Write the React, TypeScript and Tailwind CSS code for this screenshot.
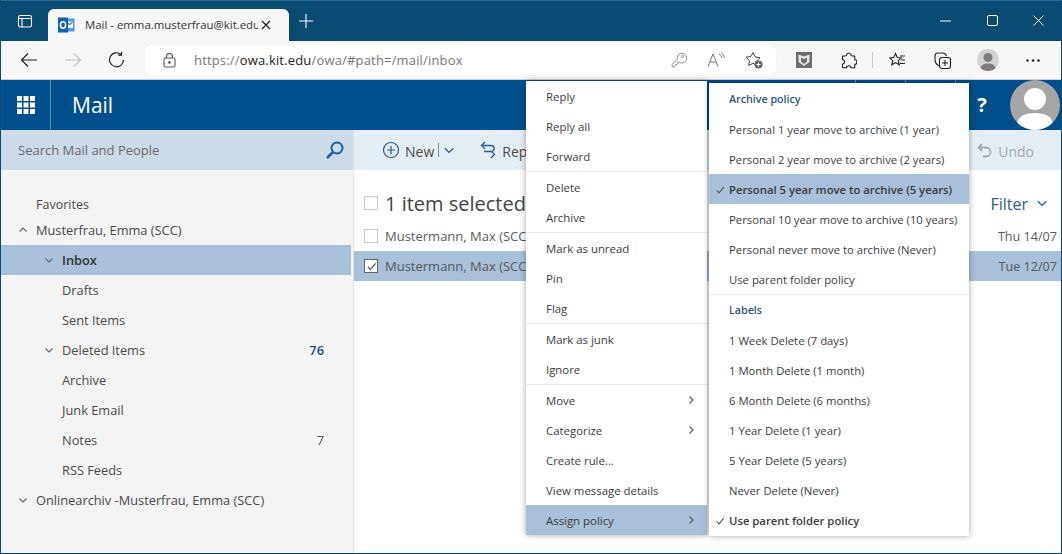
import React from "react";

const F = { fontFamily: '"Open Sans", "Noto Sans", sans-serif' };

function Chevron({ dir = "down", className = "" }: { dir?: "down" | "up" | "right"; className?: string }) {
  const d = dir === "down" ? "M1.5 3.5 5 7l3.5-3.5" : dir === "up" ? "M1.5 6.5 5 3l3.5 3.5" : "M3.5 1.5 7 5 3.5 8.5";
  return (
    <svg viewBox="0 0 10 10" className={className} fill="none" stroke="currentColor" strokeWidth="1.1">
      <path d={d} />
    </svg>
  );
}

function Check({ className = "" }: { className?: string }) {
  return (
    <svg viewBox="0 0 12 12" className={className} fill="none" stroke="currentColor" strokeWidth="1.3">
      <path d="M2 6.5 4.8 9.5 10.5 2.5" />
    </svg>
  );
}

function MenuRow({ label, arrow, active }: { label: string; arrow?: boolean; active?: boolean }) {
  return (
    <div className={`h-[30px] flex items-center pl-5 pr-[11px] text-[11.4px] text-[#3c3c3c] ${active ? "bg-[#a8c0d8]" : ""}`}>
      <span className="flex-1 pt-[2px]">{label}</span>
      {arrow && <Chevron dir="right" className="w-[10px] h-[10px] text-[#555]" />}
    </div>
  );
}

function Divider() {
  return <div className="h-px bg-[#eaeaea]" />;
}

function SubRow({ label, checked, active, bold }: { label: string; checked?: boolean; active?: boolean; bold?: boolean }) {
  return (
    <div className={`h-[30px] flex items-center pt-[2px] whitespace-nowrap text-[11.3px] text-[#3c3c3c] ${active ? "bg-[#a8c0d8]" : ""} ${bold ? "font-semibold" : ""}`}>
      <span className="w-[20px] pl-[6px] flex items-center">
        {checked && <Check className="w-[10px] h-[10px] text-[#555]" />}
      </span>
      <span>{label}</span>
    </div>
  );
}

function SubHead({ label }: { label: string }) {
  return <div className="h-[30px] flex items-center pl-[20px] text-[10.7px] font-semibold text-[#2f5587]">{label}</div>;
}

function Folder({ label, indent, chevron, count, active, countDark }: { label: string; indent: "a" | "b"; chevron?: "up" | "down"; count?: string; active?: boolean; countDark?: boolean }) {
  return (
    <div className={`h-[30px] flex items-center text-[12.8px] text-[#4a4a4a] w-[350px] pr-[27px] ${active ? "bg-[#a8c0d8] font-semibold text-[#333]" : ""}`}>
      <span className={`${indent === "a" ? "w-[35px] pl-[17px]" : "w-[61px] pl-[43px]"} flex items-center`}>
        {chevron && <Chevron dir={chevron} className="w-[10px] h-[10px] text-[#666]" />}
      </span>
      <span className="flex-1 pt-[2px]">{label}</span>
      {count && <span className={`pt-[2px] ${countDark ? "font-semibold text-[#1f4e83]" : "text-[#555]"}`}>{count}</span>}
    </div>
  );
}

function ListRow({ date, checked, active }: { date: string; checked?: boolean; active?: boolean }) {
  return (
    <div className={`h-[30px] flex items-center text-[13px] text-[#5a5a5a] pl-[10px] pr-[4px] ${active ? "bg-[#a8c0d8]" : ""}`}>
      <span className={`w-[14px] h-[14px] border flex items-center justify-center ${checked ? "border-[#666] bg-white" : "border-[#c8c8c8]"}`}>
        {checked && <Check className="w-[11px] h-[11px] text-[#555]" />}
      </span>
      <span className="ml-[7px] flex-1 pt-[2px]">Mustermann, Max (SCC)</span>
      <span className="pt-[2px] text-[12.6px]">{date}</span>
    </div>
  );
}

function IconBtn({ w, children }: { w: string; children: React.ReactNode }) {
  return <span className={`${w} flex justify-center items-center shrink-0`}>{children}</span>;
}

export default function App() {
  return (
    <div style={F} className="relative w-[1062px] h-[554px] overflow-hidden bg-white flex flex-col border-x border-b border-[#094a72]">
      {/* Title bar */}
      <div className="h-[41px] shrink-0 bg-[#094a72] border-t border-[#2a6a90] flex items-end text-white">
        <IconBtn w="w-[47px] self-center">
          <svg width="16" height="16" viewBox="0 0 16 16" fill="none" stroke="#fff" strokeWidth="1.1">
            <rect x="1.500" y="2.500" width="13" height="11.500" rx="1.800" />
            <path d="M1.500 5.500h13M5 5.500V14" />
          </svg>
        </IconBtn>
        <div className="w-[241px] h-[32px] bg-[#f7f7f7] rounded-t-md flex items-center pl-[10px]">
          <svg width="17" height="16" viewBox="0 0 17 16">
            <rect x="6" y="1.5" width="10.5" height="13" fill="#4a9be0" />
            <path d="M8 4.5h7v6.5H8z" fill="#fff" />
            <path d="M8.5 5l3 2.6 3-2.6" fill="none" stroke="#1c72c4" strokeWidth="1.1" />
            <rect x="0" y="0.5" width="10" height="15" fill="#0f62b3" />
            <ellipse cx="5" cy="8" rx="2.6" ry="3.2" fill="none" stroke="#fff" strokeWidth="1.5" />
          </svg>
          <span className="ml-[10px] w-[173px] overflow-hidden whitespace-nowrap text-[11.4px] text-[#333]">Mail - emma.musterfrau@kit.edu</span>
          <svg width="10" height="10" viewBox="0 0 10 10" stroke="#222" strokeWidth="1.3" className="ml-[3px]">
            <path d="M1 1l8 8M9 1l-8 8" />
          </svg>
        </div>
        <IconBtn w="w-[34px] self-center">
          <svg width="14" height="14" viewBox="0 0 14 14" stroke="#fff" strokeWidth="1.1">
            <path d="M7 0v14M0 7h14" />
          </svg>
        </IconBtn>
        <div className="flex-1" />
        <div className="self-stretch flex items-center mb-[1px]">
          <IconBtn w="w-[47px]">
            <svg width="11" height="2" viewBox="0 0 11 2" stroke="#fff"><path d="M0 1h11" /></svg>
          </IconBtn>
          <IconBtn w="w-[46px]">
            <svg width="11" height="11" viewBox="0 0 11 11" fill="none" stroke="#fff"><rect x="0.5" y="0.5" width="10" height="10" rx="1.5" /></svg>
          </IconBtn>
          <IconBtn w="w-[46px]">
            <svg width="11" height="11" viewBox="0 0 11 11" stroke="#fff"><path d="M0.5.5l10 10M10.5.5l-10 10" /></svg>
          </IconBtn>
        </div>
      </div>

      {/* Browser toolbar */}
      <div className="h-[39px] shrink-0 bg-[#f7f7f7] border-b border-[#d0d0d0] flex items-center">
        <IconBtn w="w-[56px]">
          <svg width="18" height="16" viewBox="0 0 18 16" fill="none" stroke="#222" strokeWidth="1.2"><path d="M17 8H1.5M8 1.5 1.5 8 8 14.5" /></svg>
        </IconBtn>
        <IconBtn w="w-[32px]">
          <svg width="18" height="16" viewBox="0 0 18 16" fill="none" stroke="#c4c4c4" strokeWidth="1.2"><path d="M1 8h15.5M10 1.5 16.5 8 10 14.5" /></svg>
        </IconBtn>
        <IconBtn w="w-[56px]">
          <svg width="18" height="18" viewBox="0 0 18 18" fill="none" stroke="#222" strokeWidth="1.2"><path d="M15.5 9A7 7 0 1 1 13 3.4M13.5 0.8v3.4h-3.4" /></svg>
        </IconBtn>
        <div className="w-[631px] h-[30px] bg-white rounded-md flex items-center shadow-[0_0_1px_rgba(0,0,0,0.1)]">
          <span className="w-[49px] flex justify-center">
            <svg width="13" height="15" viewBox="0 0 13 15" fill="none" stroke="#555" strokeWidth="1.1">
              <rect x="1" y="5" width="11" height="9" rx="1.5" />
              <path d="M3.5 5V3.5a3 3 0 0 1 6 0V5" />
              <circle cx="6.5" cy="9.5" r="0.8" fill="#555" />
            </svg>
          </span>
          <span className="text-[13px] text-[#777] tracking-[0.17px] pt-[2px]">https://<span className="text-[#222]">owa.kit.edu</span>/owa/#path=/mail/inbox</span>
          <span className="flex-1" />
          <span className="flex items-center gap-[20px] pr-[13px]">
            <svg width="16" height="16" viewBox="0 0 16 16" fill="none" stroke="#8a8a8a" strokeWidth="1"><path d="M6.200 7.500 1.200 12.500v2.300h2.300l1-1v-1.300h1.300l1-1v-1.300h1.400a4.800 4.800 0 1 0-2-3.200z" /><circle cx="11.500" cy="4.500" r="1" /></svg>
            <svg width="18" height="16" viewBox="0 0 18 16" fill="none" stroke="#777" strokeWidth="1"><path d="M1 14.500 6 2l5 12.500M3 10h6M12 2c1.500 1 2.500 2.500 2.800 4M14 0.500c2 1.500 3 3.500 3.300 5.500" /></svg>
            <svg width="18" height="18" viewBox="0 0 18 18" fill="none" stroke="#444" strokeWidth="1"><path d="M8 1.500l2.200 4.500 4.800.7-3.500 3.400.8 4.900L8 12.300 3.700 14.500l.8-4.900L1 6.200l4.800-.7z" /><circle cx="13.500" cy="13.500" r="4" fill="#666" stroke="none" /><path d="M13.500 11.500v4M11.500 13.500h4" stroke="#fff" /></svg>
          </span>
        </div>
        <IconBtn w="w-[56px]">
          <svg width="16" height="16" viewBox="0 0 16 16"><rect width="16" height="16" fill="#6d6d6d" /><path d="M2.500 2.500 8 4.500l5.500-2V10L8 14 2.500 10z" fill="#e8e8e8" /><path d="M5 5.500 8 7l3-1.500V9.500L8 12 5 9.500z" fill="#6d6d6d" /></svg>
        </IconBtn>
        <IconBtn w="w-[34px]">
          <svg width="16" height="17" viewBox="0 0 16 17" fill="none" stroke="#222" strokeWidth="1.1" strokeLinejoin="round"><path d="M5.500 3.200c0-2.600 4.500-2.600 4.500 0 0 .5.300.8 3.300.8.300 0 .5.200.5.500 0 3-.3 3.200.2 3.200 2.600 0 2.600 4.500 0 4.500-.5 0-.2.300-.2 3 0 .4-.2.600-.5.600H10c0-2.800-4.500-2.800-4.500 0H2c-.3 0-.5-.2-.5-.6V12c2.600 0 2.600-4.500 0-4.500V4.500c0-.3.200-.5.500-.5 3 0 3.500-.3 3.500-.8z" /></svg>
        </IconBtn>
        <span className="w-px h-[16px] bg-[#c8c8c8] mx-[6px]" />
        <IconBtn w="w-[37px]">
          <svg width="17" height="16" viewBox="0 0 17 16" fill="none" stroke="#222" strokeWidth="1.1"><path d="M6.500 1.500 8.300 5.500l4 .4-3 2.700.9 4.200-3.700-2.200-3.700 2.200.9-4.200-3-2.700 4-.4zM11 4h5M12 8h4M11 11.500h5" /></svg>
        </IconBtn>
        <IconBtn w="w-[52px]">
          <svg width="17" height="17" viewBox="0 0 17 17" fill="none" stroke="#222" strokeWidth="1.1"><rect x="5.500" y="5.500" width="11" height="11" rx="2.500" /><path d="M11 8v6M8 11h6M5.500 14C3 13 1 10 1 7V4a3 3 0 0 1 3-3h4c2 0 4 1 4.500 3" /></svg>
        </IconBtn>
        <IconBtn w="w-[39px]">
          <span className="w-[22px] h-[22px] rounded-full bg-[#d5d3d1] flex items-center justify-center overflow-hidden">
            <svg width="22" height="22" viewBox="0 0 22 22" fill="#7d7a78"><circle cx="11" cy="8.500" r="4.500" /><path d="M3 22c0-6 4-7.500 8-7.500s8 1.500 8 7.500z" /></svg>
          </span>
        </IconBtn>
        <IconBtn w="w-[52px]">
          <svg width="14" height="3" viewBox="0 0 14 3" fill="#222"><circle cx="1.500" cy="1.500" r="1.200" /><circle cx="7" cy="1.500" r="1.200" /><circle cx="12.500" cy="1.500" r="1.200" /></svg>
        </IconBtn>
      </div>

      {/* OWA header */}
      <div className="h-[50px] shrink-0 bg-[#004e8c] flex items-center text-white">
        <div className="w-[50px] h-full flex items-center justify-center border-r border-[#5b8bb5]">
          <svg width="18" height="18" viewBox="0 0 18 18" fill="#fff">
            {[0, 6.5, 13].map((y) => [0, 6.5, 13].map((x) => <rect key={`${x}-${y}`} x={x} y={y} width="5" height="5" />))}
          </svg>
        </div>
        <span className="ml-[21px] text-[21px] leading-none">Mail</span>
        <span className="flex-1" />
        <span className="w-px h-full bg-[#5b8bb5] mr-[49px]" />
        <span className="w-px h-full bg-[#5b8bb5] mr-[49px]" />
        <span className="w-px h-full bg-[#5b8bb5] mr-[20px]" />
        <span className="text-[20px] font-bold w-[12px] text-center">?</span>
        <span className="w-[50px] h-[50px] rounded-full bg-[#a6a6a6] ml-[22px] mr-px overflow-hidden">
          <svg width="50" height="50" viewBox="0 0 50 50" fill="#fff"><circle cx="25" cy="19" r="11" /><path d="M7 46c0-10 8-13 18-13s18 3 18 13c-4 3-12 4-18 4s-14-1-18-4z" /></svg>
        </span>
      </div>

      {/* Content */}
      <div className="flex-1 flex min-h-0">
        {/* Left column */}
        <div className="w-[352px] shrink-0 bg-[#f4f4f4] flex flex-col">
          <div className="h-[40px] bg-[#cddbe8] flex items-center pl-[17px] pr-[9px]">
            <span className="flex-1 text-[13px] text-[#6a6a6a] pt-[2px]">Search Mail and People</span>
            <svg width="18" height="18" viewBox="0 0 18 18" fill="none" stroke="#1d5f9e" strokeWidth="2"><circle cx="11" cy="7" r="5.500" /><path d="M7 11l-6 6" strokeWidth="2.500" /></svg>
          </div>
          <div className="pt-[19px]">
            <div className="h-[26px] flex items-center pl-[35px] pt-[6px] text-[12.5px] text-[#4a4a4a]">Favorites</div>
            <Folder label="Musterfrau, Emma (SCC)" indent="a" chevron="up" />
            <Folder label="Inbox" indent="b" chevron="down" active />
            <Folder label="Drafts" indent="b" />
            <Folder label="Sent Items" indent="b" />
            <Folder label="Deleted Items" indent="b" chevron="down" count="76" countDark />
            <Folder label="Archive" indent="b" />
            <Folder label="Junk Email" indent="b" />
            <Folder label="Notes" indent="b" count="7" />
            <Folder label="RSS Feeds" indent="b" />
            <Folder label="Onlinearchiv -Musterfrau, Emma (SCC)" indent="a" chevron="down" />
          </div>
        </div>

        {/* Right column */}
        <div className="flex-1 flex flex-col border-l border-[#e4e4e4] min-w-0">
          <div className="h-[40px] shrink-0 bg-[#e6eef5] flex items-center pl-[28px] text-[14px] text-[#4a4a4a]">
            <svg width="18" height="18" viewBox="0 0 18 18" fill="none" stroke="#1d5f9e" strokeWidth="1.200"><circle cx="9" cy="9" r="7.500" /><path d="M9 5v8M5 9h8" /></svg>
            <span className="ml-[5px] pt-[2px]">New</span>
            <span className="ml-[4px] w-px h-[14px] bg-[#888]" />
            <Chevron dir="down" className="w-[12px] h-[12px] ml-[4px] text-[#1d5f9e]" />
            <svg width="16" height="18" viewBox="0 0 16 18" fill="none" stroke="#1d5f9e" strokeWidth="1.300" className="ml-[25px]"><path d="M5 1 1.500 4.500 5 8M1.500 4.500H11c4 0 4 5 1 6H4M11 17l3.500-3.500L11 10" /></svg>
            <span className="ml-[6px] pt-[2px]">Reply</span>
            <span className="flex-1" />
            <svg width="15" height="15" viewBox="0 0 15 15" fill="none" stroke="#a0a8b0" strokeWidth="1.800"><path d="M5 1 1.500 4.500 5 8M1.500 4.500H9a4.500 4.500 0 0 1 0 9H6" /></svg>
            <span className="ml-[6px] mr-[27px] text-[#a0a8b0] pt-[2px]">Undo</span>
          </div>
          <div className="h-[51px] shrink-0 flex items-center pl-[10px] pr-[13px] pt-[15px]">
            <span className="w-[14px] h-[14px] border border-[#c8c8c8]" />
            <span className="ml-[7px] flex-1 text-[20px] text-[#444] pt-[2px]">1 item selected</span>
            <span className="text-[16px] text-[#2d5c92] pt-[2px]">Filter</span>
            <Chevron dir="down" className="w-[12px] h-[12px] ml-[8px] text-[#1d5f9e]" />
          </div>
          <ListRow date="Thu 14/07" />
          <ListRow date="Tue 12/07" checked active />
        </div>
      </div>

      {/* Context menu */}
      <div className="absolute left-[525px] top-[81px] w-[181px] bg-white shadow-[0_0_6px_rgba(0,0,0,0.35)]">
        <MenuRow label="Reply" />
        <MenuRow label="Reply all" />
        <MenuRow label="Forward" />
        <Divider />
        <MenuRow label="Delete" />
        <MenuRow label="Archive" />
        <Divider />
        <MenuRow label="Mark as unread" />
        <MenuRow label="Pin" />
        <MenuRow label="Flag" />
        <Divider />
        <MenuRow label="Mark as junk" />
        <MenuRow label="Ignore" />
        <Divider />
        <MenuRow label="Move" arrow />
        <MenuRow label="Categorize" arrow />
        <MenuRow label="Create rule..." />
        <MenuRow label="View message details" />
        <MenuRow label="Assign policy" arrow active />
      </div>

      {/* Submenu */}
      <div className="absolute left-[708px] top-[83px] w-[260px] bg-white shadow-[0_0_6px_rgba(0,0,0,0.35)] py-px">
        <SubHead label="Archive policy" />
        <SubRow label="Personal 1 year move to archive (1 year)" />
        <SubRow label="Personal 2 year move to archive (2 years)" />
        <SubRow label="Personal 5 year move to archive (5 years)" checked active bold />
        <SubRow label="Personal 10 year move to archive (10 years)" />
        <SubRow label="Personal never move to archive (Never)" />
        <SubRow label="Use parent folder policy" />
        <Divider />
        <SubHead label="Labels" />
        <SubRow label="1 Week Delete (7 days)" />
        <SubRow label="1 Month Delete (1 month)" />
        <SubRow label="6 Month Delete (6 months)" />
        <SubRow label="1 Year Delete (1 year)" />
        <SubRow label="5 Year Delete (5 years)" />
        <SubRow label="Never Delete (Never)" />
        <SubRow label="Use parent folder policy" checked bold />
      </div>
    </div>
  );
}
